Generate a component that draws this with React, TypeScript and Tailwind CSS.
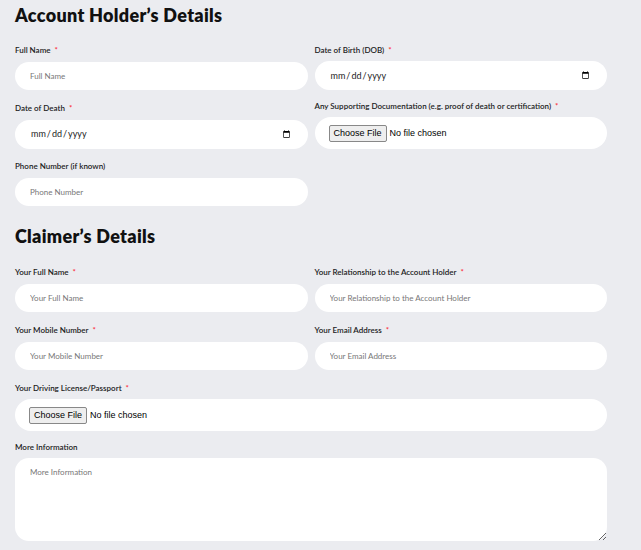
import React from "react";

const F = { fontFamily: "Lato, 'Noto Sans', sans-serif" };

function Label({ t, req = true }: { t: string; req?: boolean }) {
  return (
    <div className="text-[8px] font-semibold text-[#222] h-[11px] leading-[11px] mb-[5px]">
      {t}
      {req && <span className="text-red-500 ml-[4px]">*</span>}
    </div>
  );
}

function Text({ ph }: { ph: string }) {
  return (
    <input
      placeholder={ph}
      style={F}
      className="w-full h-[28px] rounded-full bg-white px-[15px] text-[8px] placeholder:text-[#777] outline-none"
    />
  );
}

function DateI() {
  return (
    <input
      type="date"
      style={F}
      className="w-full h-[29px] rounded-full bg-white px-[15px] text-[9px] text-[#222] outline-none"
    />
  );
}

function FileI() {
  return (
    <div className="w-full h-[32px] rounded-full bg-white px-[14px] flex items-center">
      <input type="file" className="text-[9px] file:text-[9px] file:px-[4px] file:py-[1px] file:mr-[3px] file:border file:border-[#888] file:bg-[#eee] file:rounded-[2px]" style={{ fontFamily: "Arial, 'Liberation Sans', sans-serif" }} />
    </div>
  );
}

export default function App() {
  return (
    <div style={F} className="w-[641px] h-[550px] bg-[#ebecf0] pl-[15px] pr-[34px] overflow-hidden">
      <h1 className="text-[18px] font-extrabold text-[#111] tracking-[0.3px] pt-[3px] h-[40px] leading-[24px]">Account Holder’s Details</h1>
      <div className="grid grid-cols-2 gap-x-[7px] items-start">
        <div className="mt-[5px]"><Label t="Full Name" /><Text ph="Full Name" /></div>
        <div className="mt-[5px]"><Label t="Date of Birth (DOB)" /><DateI /></div>
        <div className="mt-[13px]"><Label t="Date of Death" /><DateI /></div>
        <div className="mt-[11px]"><Label t="Any Supporting Documentation (e.g. proof of death or certification)" /><FileI /></div>
        <div className="mt-[12px]"><Label t="Phone Number (if known)" req={false} /><Text ph="Phone Number" /></div>
      </div>
      <h1 className="text-[18px] font-extrabold text-[#111] tracking-[0.3px] mt-[18px] h-[40px] leading-[24px]">Claimer’s Details</h1>
      <div className="grid grid-cols-2 gap-x-[7px] items-start">
        <div className="mt-[3px]"><Label t="Your Full Name" /><Text ph="Your Full Name" /></div>
        <div className="mt-[3px]"><Label t="Your Relationship to the Account Holder" /><Text ph="Your Relationship to the Account Holder" /></div>
        <div className="mt-[13px]"><Label t="Your Mobile Number" /><Text ph="Your Mobile Number" /></div>
        <div className="mt-[13px]"><Label t="Your Email Address" /><Text ph="Your Email Address" /></div>
        <div className="mt-[13px] col-span-2"><Label t="Your Driving License/Passport" /><FileI /></div>
        <div className="mt-[11px] col-span-2">
          <Label t="More Information" req={false} />
          <textarea placeholder="More Information" style={F} className="w-full h-[83px] rounded-[14px] bg-white px-[15px] py-[8px] text-[8px] placeholder:text-[#777] outline-none block" />
        </div>
      </div>
    </div>
  );
}
